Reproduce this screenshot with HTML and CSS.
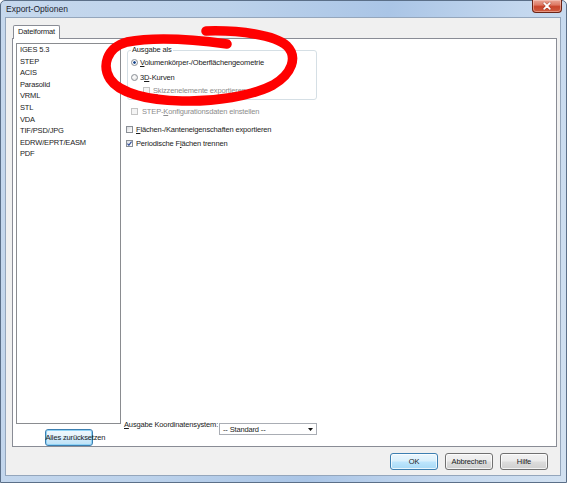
FILE: index.html
```html
<!DOCTYPE html>
<html lang="de">
<head>
<meta charset="utf-8">
<title>Export-Optionen</title>
<link rel="stylesheet" href="styles.css">
</head>
<body>
<div class="window">
  <div class="titlebar">
    <span class="title">Export-Optionen</span>
    <div class="close">
      <svg width="12" height="8" viewBox="0 0 12 8"><path d="M3.2 1.2 L8.8 6.8 M8.8 1.2 L3.2 6.8" stroke="#6a1d10" stroke-width="3" stroke-linecap="round" opacity="0.35"/><path d="M3.2 1.2 L8.8 6.8 M8.8 1.2 L3.2 6.8" stroke="#fff" stroke-width="1.8" stroke-linecap="round"/></svg>
    </div>
  </div>
  <div class="client">
    <div class="tabs"><div class="tab">Dateiformat</div></div>
    <div class="panel">
      <div class="left">
        <ul class="list">
          <li>IGES 5.3</li>
          <li>STEP</li>
          <li>ACIS</li>
          <li>Parasolid</li>
          <li>VRML</li>
          <li>STL</li>
          <li>VDA</li>
          <li>TIF/PSD/JPG</li>
          <li>EDRW/EPRT/EASM</li>
          <li>PDF</li>
        </ul>
        <button class="btn btn-focus reset">Alles zurücksetzen</button>
      </div>
      <div class="right">
        <div class="group">
          <div class="group-label">Ausgabe als</div>
          <div class="opt opt-r1"><span class="radio checked"></span><span><u>V</u>olumenkörper-/Oberflächengeometrie</span></div>
          <div class="opt opt-r2"><span class="radio"></span><span>3<u>D</u>-Kurven</span></div>
          <div class="opt opt-sub disabled"><span class="check"></span><span><u>S</u>kizzenelemente exportieren</span></div>
        </div>
        <div class="opt opt-step disabled"><span class="check"></span><span>STEP-<u>K</u>onfigurationsdaten einstellen</span></div>
        <div class="opt opt-f"><span class="check"></span><span><u>F</u>lächen-/Kanteneigenschaften exportieren</span></div>
        <div class="opt opt-p"><span class="check"><svg width="5" height="5" viewBox="0 0 5 5"><path d="M0.4 2.6 L1.9 4.2 L4.6 0.6" fill="none" stroke="#34509a" stroke-width="1.2"/></svg></span><span>Periodische F<u>l</u>ächen trennen</span></div>
        <div class="coord">
          <span class="coord-label"><u>A</u>usgabe Koordinatensystem:</span>
          <div class="select"><span>-- Standard --</span><svg width="5" height="3" viewBox="0 0 5 3"><path d="M0 0 H5 L2.5 3 Z" fill="#111"/></svg></div>
        </div>
      </div>
    </div>
    <div class="footer">
      <button class="btn btn-default">OK</button>
      <button class="btn">Abbrechen</button>
      <button class="btn">Hilfe</button>
    </div>
  </div>
  <svg class="scribble" width="567" height="483" viewBox="0 0 567 483">
    <path d="M206,31 C240,30 275,35 287,46 C298,57 292,74 273,85 C252,96 214,102 182,101 C150,100 120,94 110,79 C102,66 106,48 127,42 C158,36 198,40 227,44" fill="none" stroke="#ff0000" stroke-width="9.5" stroke-linecap="round" stroke-linejoin="round"/>
  </svg>
</div>
</body>
</html>
```
FILE: styles.css
```css
* { box-sizing: border-box; }
html, body { margin: 0; padding: 0; }
body {
  width: 567px;
  height: 483px;
  overflow: hidden;
  background: #ffffff;
  font-family: "Liberation Sans", Arial, sans-serif;
  font-size: 7.5px;
  letter-spacing: -0.15px;
  color: #1b1b1b;
}

.window {
  position: relative;
  width: 567px;
  height: 483px;
  display: flex;
  flex-direction: column;
  border: 1px solid #5b6f88;
  border-radius: 5px 5px 0 0;
  padding: 0 5px 6px 4px;
  background: linear-gradient(100deg, #c6d8ed 0%, #bcd2eb 35%, #aac5e6 60%, #c3d7ee 80%, #d2e1f1 100%);
}

.titlebar {
  height: 18px;
  display: flex;
  align-items: center;
}
.title {
  margin-left: 1px;
  font-size: 8.5px;
  letter-spacing: 0;
  color: #1c2430;
}
.close {
  margin-left: auto;
  margin-right: -1px;
  align-self: flex-start;
  margin-top: -1px;
  width: 30px;
  height: 13px;
  border: 1px solid #6b2416;
  border-top: none;
  border-radius: 0 0 4px 4px;
  background: linear-gradient(#eaa595 0%, #de7b66 40%, #c9452c 55%, #cf5d40 100%);
  display: flex;
  align-items: center;
  justify-content: center;
  box-shadow: inset 0 0 0 1px rgba(255, 220, 210, 0.45);
}

.client {
  flex: 1;
  display: flex;
  flex-direction: column;
  border: 1px solid #94a6bc;
  background: #f0f0f0;
  padding: 7px 3px 0 6px;
}

.tabs { display: flex; }
.tab {
  position: relative;
  z-index: 1;
  width: 47px;
  height: 14px;
  margin-left: 1px;
  margin-bottom: -1px;
  border: 1px solid #898c95;
  border-bottom: none;
  border-radius: 2px 2px 0 0;
  background: #ffffff;
  line-height: 12px;
  text-align: center;
}

.panel {
  flex: 1;
  display: flex;
  border: 1px solid #898c95;
  background: #ffffff;
}

.left {
  width: 108px;
  padding: 4px 0 0 3px;
  display: flex;
  flex-direction: column;
  align-items: center;
}
.list {
  list-style: none;
  margin: 0;
  padding: 0 0 0 3px;
  width: 105px;
  height: 381px;
  border: 1px solid #8a8c90;
  background: #ffffff;
}
.list li {
  line-height: 11.6px;
  height: 11.6px;
  white-space: nowrap;
}
.reset {
  margin-top: 5px;
  width: 62px;
  height: 13px;
  white-space: nowrap;
  line-height: 11px;
  letter-spacing: -0.25px;
}

.right {
  flex: 1;
  display: flex;
  flex-direction: column;
  align-items: flex-start;
  padding: 11px 0 11px 3px;
}

.group {
  margin-left: 3px;
  width: 190px;
  border: 1px solid #d5dfe5;
  border-radius: 3px;
  padding: 0 0 3px 3px;
}
.group-label {
  display: block;
  width: fit-content;
  margin-top: -6px;
  padding: 0 1px;
  line-height: 10px;
  height: 10px;
  background: #ffffff;
}

.opt {
  display: flex;
  align-items: center;
  height: 12px;
  white-space: nowrap;
}
.opt-r1 { margin-top: 1px; }
.opt-r2 { margin-top: 3px; }
.opt-sub { margin-top: 1px; margin-left: 12px; }
.opt-step { margin-top: 5px; margin-left: 7px; }
.opt-f { margin-top: 6px; margin-left: 2px; }
.opt-p { margin-top: 2px; margin-left: 2px; }

.disabled { color: #8d8d8d; }

.radio {
  width: 7px;
  height: 7px;
  margin-right: 2px;
  border-radius: 50%;
  border: 1px solid #8a8f96;
  background: radial-gradient(circle at 40% 40%, #ffffff 0%, #e6e6e6 70%, #d0d0d0 100%);
  flex: none;
}
.radio.checked {
  background: radial-gradient(circle, #1c3f78 0%, #2a5aa0 30%, #ffffff 45%, #e4e4e4 100%);
}

.check {
  width: 7px;
  height: 7px;
  margin-right: 3px;
  border: 1px solid #8a8f96;
  background: linear-gradient(135deg, #d8dbe0 0%, #f4f4f4 60%, #ffffff 100%);
  display: flex;
  align-items: center;
  justify-content: center;
  flex: none;
}
.opt-step .check { margin-right: 4px; }
.disabled .check {
  border-color: #c4c4c4;
  background: #f4f4f4;
}

.coord {
  margin-top: auto;
  display: flex;
  align-items: flex-start;
  height: 15px;
}
.coord-label {
  width: 95px;
  line-height: 10px;
  white-space: nowrap;
}
.select {
  margin-top: 3px;
  width: 98px;
  height: 12px;
  border: 1px solid #a9adb4;
  background: #ffffff;
  display: flex;
  align-items: center;
  justify-content: space-between;
  padding: 0 3px 0 3px;
}

.footer {
  height: 28px;
  display: flex;
  justify-content: flex-end;
  align-items: flex-start;
  gap: 7px;
  padding: 6px 9px 0 0;
}

.btn {
  font: inherit;
  letter-spacing: -0.15px;
  color: #1b1b1b;
  width: 48px;
  height: 17px;
  padding: 0;
  border: 1px solid #707070;
  border-radius: 3px;
  background: linear-gradient(#f2f2f2 0%, #ebebeb 48%, #dddddd 52%, #cfcfcf 100%);
  box-shadow: inset 0 0 0 1px rgba(255, 255, 255, 0.75);
}
.btn-default {
  border-color: #3c7fb1;
  background: linear-gradient(#eaf6fd 0%, #d9f0fc 48%, #bee6fd 52%, #a7d9f5 100%);
}
.btn-focus {
  border-color: #3c7fb1;
  background: linear-gradient(#f0f8fd 0%, #e2f2fc 48%, #cfeafb 52%, #bfe2f6 100%);
  box-shadow: inset 0 0 0 1px #8fd3f6;
}

.scribble {
  position: absolute;
  left: -1px;
  top: -1px;
  pointer-events: none;
}
```
